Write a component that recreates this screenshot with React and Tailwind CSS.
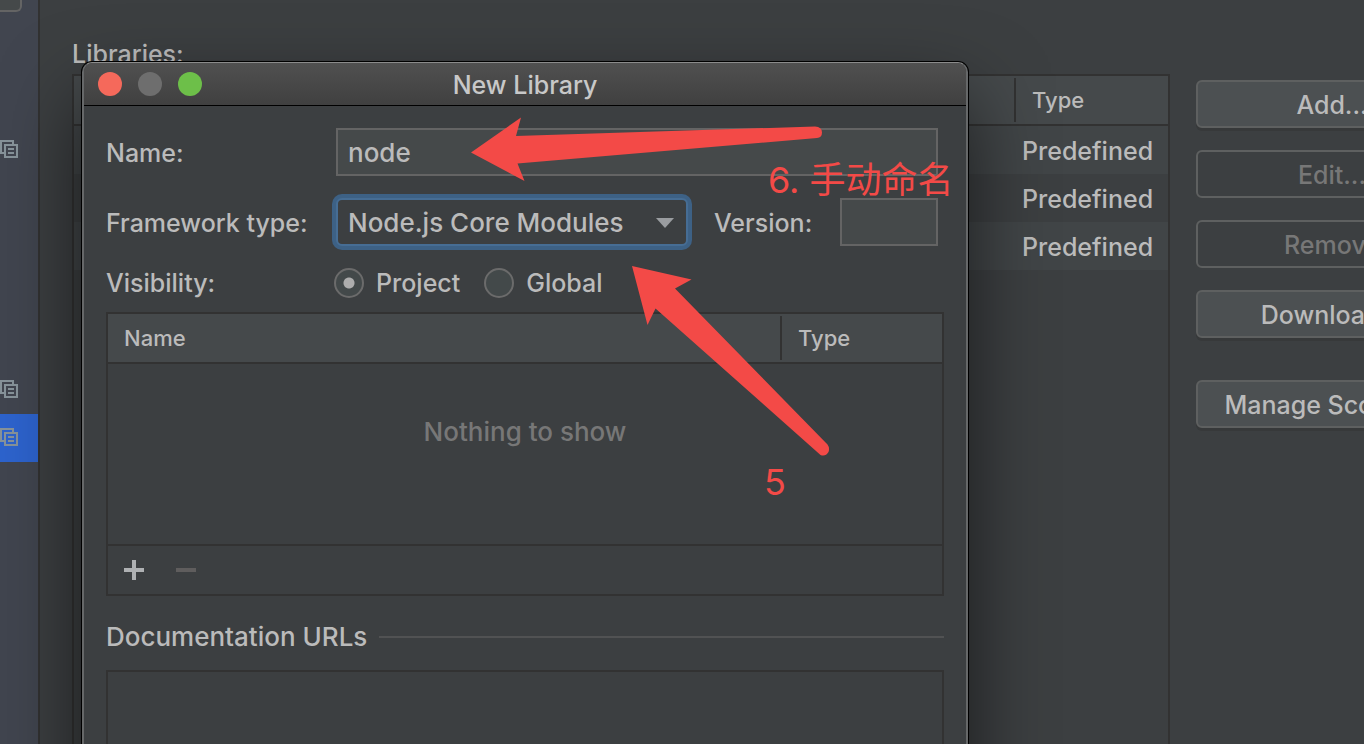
import React, { useState } from "react";

function CopyIcon() {
  return (
    <svg className="block shrink-0" width="20" height="18" viewBox="0 0 20 18" fill="none" stroke="#87939a" strokeWidth="2" aria-hidden="true">
      <path d="M13 4V1H1V13H4" />
      <path d="M5 5H17V17H5Z" />
      <path d="M8 9H14M8 13H14" />
    </svg>
  );
}

const sidebarRows = [
  { icon: false, selected: false },
  { icon: false, selected: false },
  { icon: true, selected: false },
  { icon: false, selected: false },
  { icon: false, selected: false },
  { icon: false, selected: false },
  { icon: false, selected: false },
  { icon: true, selected: false },
  { icon: true, selected: true },
];

function Sidebar() {
  return (
    <aside className="w-10 shrink-0 overflow-hidden border-r-2 border-[#323232] bg-[#41454f]">
      <div className="h-3 w-[22px] rounded-br-md border-r-2 border-b-2 border-[#646464] bg-[#45494a]" />
      <ul className="mt-[18px]">
        {sidebarRows.map((row, i) => (
          <li key={i} className={row.selected ? "flex h-12 items-center bg-[#2d63cd] pb-0.5" : "flex h-12 items-center pb-0.5"}>
            {row.icon && <CopyIcon />}
          </li>
        ))}
      </ul>
    </aside>
  );
}

function SideButton({ children, disabled, className = "" }) {
  const look = disabled
    ? "border-[#5e6060] text-[#777777]"
    : "border-[#5e6060] bg-[#4c5052] text-[#bbbbbb] shadow-[0_3px_0_#37393a]";
  return (
    <button type="button" disabled={disabled} className={`h-12 w-full rounded-md border-2 pt-0.5 text-center ${look} ${className}`}>
      {children}
    </button>
  );
}

function LibrariesPanel() {
  return (
    <main className="flex min-w-0 flex-1 flex-col pt-[38px] pl-8">
      <h2 className="mb-1 leading-8">Libraries:</h2>
      <div className="flex flex-1 gap-[26px]">
        <div className="flex-1 border-2 border-b-0 border-[#323232]">
          <table className="w-full table-fixed border-separate border-spacing-0 text-left">
            <thead>
              <tr className="h-[50px] bg-[#45494b] text-[22px]">
                <th className="border-b-2 border-[#323232] font-[450]" />
                <th className="w-[154px] border-b-2 border-[#323232] p-0 font-[450]">
                  <div className="flex h-11 items-center border-l-2 border-[#323232] pl-4">Type</div>
                </th>
              </tr>
            </thead>
            <tbody>
              {[0, 1, 2].map((i) => (
                <tr key={i} className="h-12 odd:bg-[#414547]">
                  <td />
                  <td className="p-0 pt-0.5 pl-2">Predefined</td>
                </tr>
              ))}
            </tbody>
          </table>
        </div>
        <div className="-mr-[104px] flex w-[272px] shrink-0 flex-col gap-[22px] pt-1.5">
          <SideButton>Add...</SideButton>
          <SideButton disabled>Edit...</SideButton>
          <SideButton disabled>Remove</SideButton>
          <SideButton>Download...</SideButton>
          <SideButton className="mt-5">Manage Scopes...</SideButton>
        </div>
      </div>
    </main>
  );
}

function Radio({ id, label, checked, onChange }) {
  return (
    <div className="flex items-center gap-3">
      <input
        type="radio"
        id={id}
        name="visibility"
        checked={checked}
        onChange={onChange}
        className="h-[30px] w-[30px] appearance-none rounded-full border-2 border-[#6b6b6b] bg-[#43494a] checked:bg-[radial-gradient(circle,#adadad_5px,#43494a_6px)]"
      />
      <label htmlFor={id}>{label}</label>
    </div>
  );
}

function NewLibraryDialog() {
  const [name, setName] = useState("node");
  const [version, setVersion] = useState("");
  const [visibility, setVisibility] = useState("project");
  return (
    <section
      role="dialog"
      aria-labelledby="dialog-title"
      className="absolute top-[62px] right-[396px] left-[82px] overflow-hidden rounded-[10px] border-x-2 border-t border-x-[#666869] border-t-[#8b8b8b] bg-[#3c3f41] shadow-[0_0_0_1px_#000000,0_36px_80px_rgba(0,0,0,0.6)]"
    >
      <header className="flex h-[43px] items-center border-b border-black bg-linear-to-b from-[#505050] to-[#404040] px-3.5">
        <div className="flex flex-1 gap-4">
          <button type="button" aria-label="Close" className="h-6 w-6 rounded-full bg-[#f5695b]" />
          <button type="button" aria-label="Minimize" className="h-6 w-6 rounded-full bg-[#6e6e6e]" />
          <button type="button" aria-label="Zoom" className="h-6 w-6 rounded-full bg-[#6dbf49]" />
        </div>
        <h1 id="dialog-title" className="pt-0.5 text-[#c8c8c8]">New Library</h1>
        <div className="flex-1" />
      </header>

      <form className="px-[22px] pt-[22px]" onSubmit={(e) => e.preventDefault()}>
        <div className="flex flex-col gap-[22px] pr-1.5">
          <div className="flex items-center">
            <label htmlFor="lib-name" className="w-[230px] shrink-0 pt-0.5">Name:</label>
            <input
              id="lib-name"
              type="text"
              value={name}
              onChange={(e) => setName(e.target.value)}
              className="h-12 min-w-0 flex-1 border-2 border-[#646464] bg-[#45494a] px-2.5 text-[26px] outline-none"
            />
          </div>
          <div className="flex items-center">
            <label htmlFor="framework" className="w-[230px] shrink-0 pt-0.5 whitespace-nowrap">Framework type:</label>
            <div className="relative min-w-0 flex-1">
              <select
                id="framework"
                className="block h-12 w-full appearance-none rounded-md border-2 border-[#466d94] bg-[#3c3f41] px-2.5 pt-0.5 text-[26px] shadow-[0_0_0_4px_#3d6185] outline-none"
              >
                <option>Node.js Core Modules</option>
              </select>
              <svg className="pointer-events-none absolute top-5 right-3.5" width="18" height="10" viewBox="0 0 18 10" aria-hidden="true">
                <path d="M0 0H18L9 10Z" fill="#9a9da0" />
              </svg>
            </div>
            <label htmlFor="version" className="ml-[26px] w-[126px] shrink-0 pt-0.5">Version:</label>
            <input
              id="version"
              type="text"
              value={version}
              onChange={(e) => setVersion(e.target.value)}
              className="h-12 w-[98px] border-2 border-[#646464] bg-[#45494a] px-2.5 text-[26px] outline-none"
            />
          </div>
          <div role="radiogroup" aria-labelledby="visibility-label" className="flex h-[30px] items-center">
            <span id="visibility-label" className="w-[228px] shrink-0">Visibility:</span>
            <div className="flex gap-6">
              <Radio id="vis-project" label="Project" checked={visibility === "project"} onChange={() => setVisibility("project")} />
              <Radio id="vis-global" label="Global" checked={visibility === "global"} onChange={() => setVisibility("global")} />
            </div>
          </div>
        </div>

        <div className="mt-3.5 border-2 border-[#323232]">
          <table className="w-full table-fixed border-separate border-spacing-0 text-left">
            <thead>
              <tr className="h-[50px] bg-[#45494b] text-[22px]">
                <th className="border-b-2 border-[#323232] p-0 pl-4 font-[450]">Name</th>
                <th className="w-[162px] border-b-2 border-[#323232] p-0 font-[450]">
                  <div className="flex h-11 items-center border-l-2 border-[#323232] pl-4">Type</div>
                </th>
              </tr>
            </thead>
            <tbody>
              <tr>
                <td colSpan={2} className="h-[180px] p-0 pb-11 text-center text-[26px] text-[#777777]">Nothing to show</td>
              </tr>
            </tbody>
          </table>
          <div className="flex h-[50px] items-center gap-8 border-t-2 border-[#323232] px-4">
            <button type="button" aria-label="Add">
              <svg className="block" width="20" height="20" viewBox="0 0 20 20" aria-hidden="true">
                <path d="M8 0H12V8H20V12H12V20H8V12H0V8H8Z" fill="#afb1b3" />
              </svg>
            </button>
            <button type="button" aria-label="Remove" disabled>
              <svg className="block" width="20" height="20" viewBox="0 0 20 20" aria-hidden="true">
                <path d="M0 8H20V12H0Z" fill="#5f5d5d" />
              </svg>
            </button>
          </div>
        </div>

        <div className="mt-6 flex h-[34px] items-center gap-3">
          <h3 className="text-[26px]">Documentation URLs</h3>
          <div className="h-0.5 flex-1 bg-[#515253]" />
        </div>
        <div className="mt-4 h-[200px] border-2 border-[#323232]" />
      </form>
    </section>
  );
}

function Annotations() {
  return (
    <div className="pointer-events-none absolute inset-0 overflow-hidden text-[36px] leading-10 font-[370] text-[#f34a47]">
      <svg className="absolute top-[112px] left-[464px]" width="376" height="350" viewBox="464 112 376 350" fill="#f34a47" aria-hidden="true">
        <path d="M471 152.500L521 117.500L516 136L815 126.500Q822 127 822 132.500Q822 137.500 817 138L517.500 163.500L524.500 181Z" />
        <path d="M632 266L691.500 279.500L675 288.500L827.500 444.500Q830 448 828.500 452Q825.500 457 820.500 455L655.500 308.500L647.500 325Z" />
      </svg>
      <p className="absolute top-[160px] left-[768px] whitespace-nowrap">6. 手动命名</p>
      <p className="absolute top-[462px] left-[764px]">5</p>
    </div>
  );
}

export default function App() {
  return (
    <div className="relative flex h-screen overflow-hidden bg-[#3c3f41] font-['Inter','Noto_Sans_CJK_SC',sans-serif] text-[25px] leading-8 font-[450] text-[#bbbbbb]">
      <Sidebar />
      <LibrariesPanel />
      <NewLibraryDialog />
      <Annotations />
    </div>
  );
}
